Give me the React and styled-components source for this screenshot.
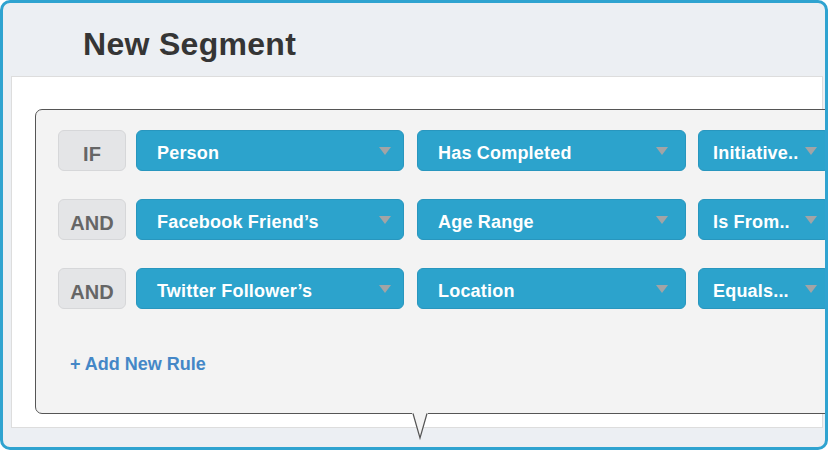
import React from 'react'
import styled, { createGlobalStyle } from 'styled-components'

const GlobalStyle = createGlobalStyle`
	html, body {
		margin: 0;
		padding: 0;
		background: #ffffff;
	}
	body {
		font-family: 'Liberation Sans', Arial, sans-serif;
	}
`

const Frame = styled.div`
	width: 828px;
	height: 450px;
	box-sizing: border-box;
	border: 3px solid #2fa3d0;
	border-radius: 10px;
	background: #eceff3;
	overflow: hidden;
	display: flex;
	flex-direction: column;
`

const Header = styled.header`
	height: 73px;
	flex-shrink: 0;
	display: flex;
	align-items: center;
	padding-left: 80px;
	padding-top: 10px;
	box-sizing: border-box;
`

const Title = styled.h1`
	margin: 0;
	font-size: 32px;
	font-weight: bold;
	color: #353535;
	letter-spacing: 0.3px;
`

const Panel = styled.section`
	height: 352px;
	margin: 0 2px 0 8px;
	box-sizing: border-box;
	background: #ffffff;
	border: 1px solid #dddddd;
	padding: 32px 0 0 23px;
	display: flex;
`

const Popover = styled.div`
	position: relative;
	width: 820px;
	height: 305px;
	flex-shrink: 0;
	box-sizing: border-box;
	background: #f3f3f3;
	border: 1px solid #555555;
	border-radius: 7px;
	padding: 20px 0 0 22px;
`

const Pointer = styled.svg`
	position: absolute;
	left: 376px;
	bottom: -26px;
	overflow: visible;
`

const Rules = styled.div`
	display: flex;
	flex-direction: column;
	gap: 28px;
`

const Row = styled.div`
	display: flex;
	align-items: center;
	height: 41px;
`

const Tag = styled.div`
	width: 68px;
	height: 41px;
	box-sizing: border-box;
	display: flex;
	align-items: center;
	justify-content: center;
	background: #e4e5e7;
	border: 1px solid #d6d7d9;
	border-radius: 6px;
	color: #666666;
	font-size: 20px;
	font-weight: bold;
	padding-top: 7px;
	margin-right: 10px;
`

const Select = styled.div`
	width: ${p => p.$w}px;
	height: 41px;
	box-sizing: border-box;
	flex-shrink: 0;
	display: flex;
	align-items: center;
	justify-content: space-between;
	background: #2ca3cc;
	border: 1px solid #2896be;
	border-radius: 6px;
	padding: 0 ${p => p.$right}px 0 ${p => p.$pad}px;
	margin-right: ${p => p.$gap}px;
	color: #ffffff;
	font-size: 18px;
	font-weight: bold;
	letter-spacing: 0.2px;
	white-space: nowrap;
`

const Label = styled.span`
	padding-top: 5px;
`

const Caret = styled.span`
	width: 0;
	height: 0;
	border-left: 6px solid transparent;
	border-right: 6px solid transparent;
	border-top: 8px solid #a2a4a6;
	margin-top: 1px;
`

const AddRule = styled.a`
	display: inline-block;
	margin: 45px 0 0 12px;
	color: #4487c7;
	font-size: 18px;
	font-weight: bold;
	text-decoration: none;
	cursor: pointer;
`

const rules = [
	{ op: 'IF', subject: 'Person', field: 'Has Completed', value: 'Initiative..' },
	{ op: 'AND', subject: 'Facebook Friend’s', field: 'Age Range', value: 'Is From..' },
	{ op: 'AND', subject: 'Twitter Follower’s', field: 'Location', value: 'Equals...' },
]

const App = () => {
	return (
		<>
			<GlobalStyle />
			<Frame>
				<Header>
					<Title>New Segment</Title>
				</Header>
				<Panel>
					<Popover>
						<Rules>
							{rules.map((rule, i) => (
								<Row key={i}>
									<Tag>{rule.op}</Tag>
									<Select $w={268} $pad={20} $right={12} $gap={13}>
										<Label>{rule.subject}</Label>
										<Caret />
									</Select>
									<Select $w={269} $pad={20} $right={17} $gap={12}>
										<Label>{rule.field}</Label>
										<Caret />
									</Select>
									<Select $w={132} $pad={14} $right={12} $gap={0}>
										<Label>{rule.value}</Label>
										<Caret />
									</Select>
								</Row>
							))}
						</Rules>
						<AddRule>+ Add New Rule</AddRule>
						<Pointer width="16" height="26" viewBox="0 0 16 26">
							<polygon points="0,0 16,0 8,25" fill="#f3f3f3" />
							<polyline points="1,0.5 8,25 15,0.5" fill="none" stroke="#555555" strokeWidth="1.2" />
						</Pointer>
					</Popover>
				</Panel>
			</Frame>
		</>
	)
}

export default App
